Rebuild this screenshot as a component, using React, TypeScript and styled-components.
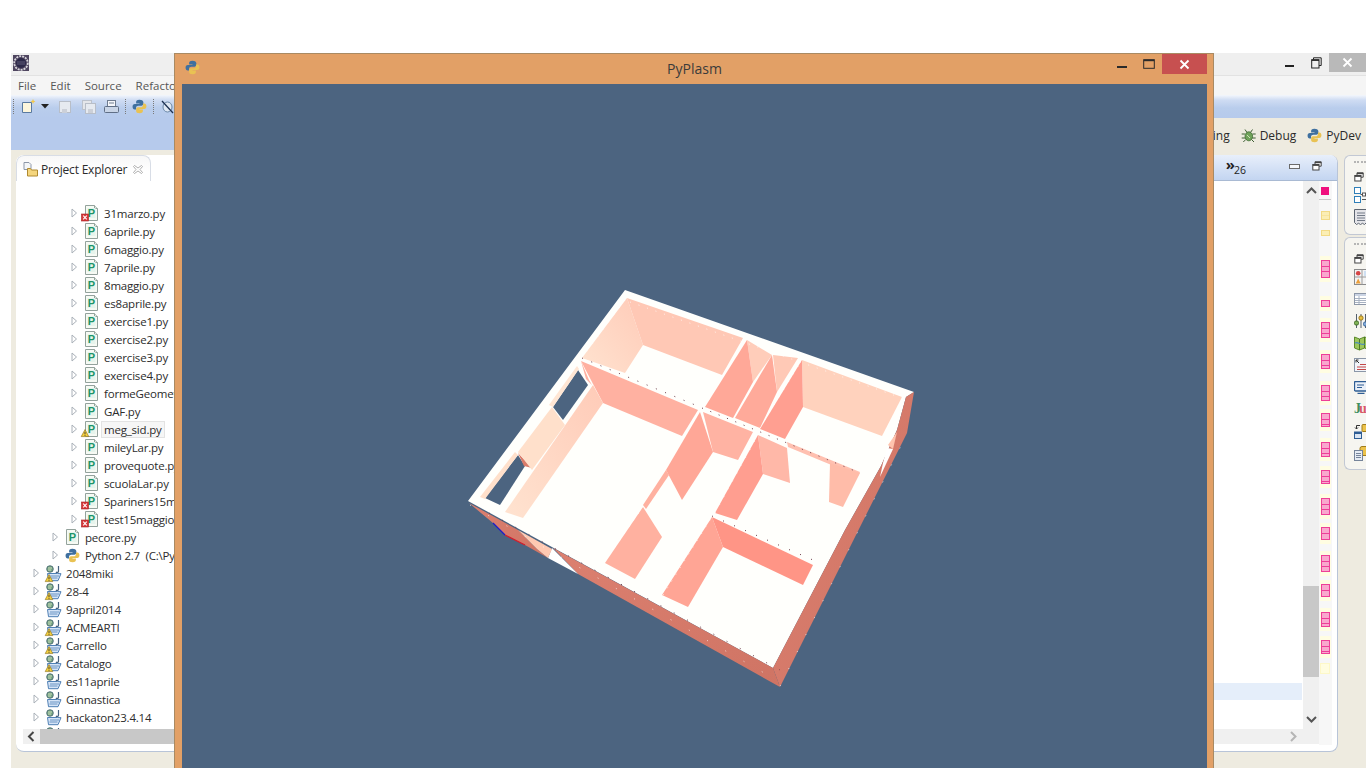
import React from 'react';
import styled, { createGlobalStyle } from 'styled-components';

const GlobalStyle = createGlobalStyle`
  html, body {
    margin: 0;
    padding: 0;
    background: #ffffff;
    overflow: hidden;
  }
  * {
    box-sizing: border-box;
  }
`;

const uiFont = `"Open Sans", "Noto Sans", "Liberation Sans", sans-serif`;

const Screen = styled.div`
  position: relative;
  width: 1366px;
  height: 768px;
  padding: 53px 0 0 11px;
  overflow: hidden;
  font-family: ${uiFont};
  font-size: 11.5px;
  color: #2c2c2c;
`;

const Eclipse = styled.div`
  display: flex;
  flex-direction: column;
  height: 715px;
  background: #eeebe0;
`;

const TitleBar = styled.div`
  display: flex;
  align-items: flex-start;
  justify-content: space-between;
  height: 23px;
  padding-left: 2px;
  background: #efefef;
  border-bottom: 1px solid #e2e2e2;
`;

const AppLogo = styled.svg`
  margin-top: 2px;
`;

const TitleControls = styled.div`
  display: flex;
  align-items: flex-start;
`;

const ControlCell = styled.div<{ $w: number; $bg?: string }>`
  display: flex;
  align-items: center;
  justify-content: center;
  width: ${(p) => p.$w}px;
  height: 19px;
  background: ${(p) => p.$bg ?? 'transparent'};
`;

const MenuBar = styled.div`
  display: flex;
  align-items: center;
  gap: 14px;
  height: 19px;
  padding-left: 7px;
  background: #f5f5f5;
  color: #555555;
  font-size: 11.5px;
`;

const ToolRow = styled.div`
  display: flex;
  align-items: center;
  height: 23px;
  padding-left: 2px;
  background: linear-gradient(#f4f7fc 0, #cfdcf3 5px, #b9cdec 13px, #b6caec 100%);
`;

const ToolGrip = styled.span<{ $before?: number }>`
  width: 0;
  height: 15px;
  margin: 0 5px 0 ${(p) => p.$before ?? 0}px;
  border-left: 1px dotted #7a7a7a;
`;

const ToolButton = styled.span<{ $w: number; $before?: number }>`
  display: flex;
  align-items: center;
  justify-content: center;
  width: ${(p) => p.$w}px;
  height: 18px;
  margin-left: ${(p) => p.$before ?? 0}px;
`;

const PerspectiveRow = styled.div`
  display: flex;
  height: 32px;
`;

const BlueFill = styled.div`
  width: 300px;
  background: #b6caec;
`;

const PerspectiveBar = styled.div`
  flex: 1;
  display: flex;
  align-items: center;
  justify-content: flex-end;
  gap: 11px;
  padding: 3px 5px 0 0;
  background: #eeebe0;
  font-size: 12px;
  color: #2a2a2a;
`;

const Perspective = styled.span`
  display: flex;
  align-items: center;
  gap: 4px;
  white-space: nowrap;
`;

const Workbench = styled.div`
  flex: 1;
  display: flex;
  padding: 5px 0 16px 5px;
  min-height: 0;
`;

const Panel = styled.section<{ $w?: number }>`
  display: flex;
  flex-direction: column;
  width: ${(p) => (p.$w ? `${p.$w}px` : 'auto')};
  flex: ${(p) => (p.$w ? '0 0 auto' : '1')};
  min-width: 0;
  background: #ffffff;
  border-radius: 8px;
  border-right: 1px solid #b8c4d8;
  border-bottom: 1px solid #b8c4d8;
  overflow: hidden;
`;

const ExplorerHead = styled.div`
  height: 26px;
  background: #ffffff;
`;

const ExplorerTab = styled.div`
  display: flex;
  align-items: center;
  width: 135px;
  height: 26px;
  padding: 2px 0 0 6px;
  border: 1px solid #d8dde6;
  border-bottom: 0;
  border-radius: 8px 8px 0 0;
  background: linear-gradient(#f7f7f7, #ffffff 60%);
  font-size: 12px;
`;

const TabLabel = styled.span`
  margin: 0 6px 0 3px;
  letter-spacing: -0.2px;
  white-space: nowrap;
`;

const Tree = styled.div`
  flex: 1;
  min-height: 0;
  padding-top: 23px;
  overflow: hidden;
`;

const Row = styled.div<{ $level: number }>`
  display: flex;
  align-items: center;
  height: 18px;
  padding-left: ${(p) => 17 + (p.$level - 1) * 19}px;
  white-space: pre;
`;

const Twisty = styled.span`
  display: flex;
  align-items: center;
  width: 13px;
`;

const RowIcon = styled.span`
  display: flex;
  align-items: center;
  width: 20px;
  height: 16px;
`;

const RowLabel = styled.span<{ $selected?: boolean }>`
  margin-left: ${(p) => (p.$selected ? '-3px' : '0')};
  padding: ${(p) => (p.$selected ? '0 2px' : '0')};
  height: 17px;
  letter-spacing: -0.2px;
  background: ${(p) => (p.$selected ? '#f6f6f6' : 'transparent')};
  border: ${(p) => (p.$selected ? '1px solid #e3e3e3' : '0')};
  line-height: ${(p) => (p.$selected ? '15px' : '17px')};
`;

const HScroll = styled.div`
  display: flex;
  height: 15px;
  margin-bottom: 7px;
  background: #f0f0f0;
`;

const ExplorerHScroll = styled(HScroll)`
  margin-left: 7px;
`;

const ScrollEnd = styled.span<{ $w: number }>`
  display: flex;
  align-items: center;
  justify-content: center;
  flex: 0 0 ${(p) => p.$w}px;
`;

const ScrollRest = styled.span`
  display: flex;
  align-items: center;
  justify-content: flex-end;
  flex: 1;
  padding-right: 20px;
`;

const HThumb = styled.span`
  flex: 1;
  background: #c8c8c8;
`;

const PanelGap = styled.div`
  flex: 0 0 4px;
`;

const EditorHead = styled.div`
  display: flex;
  align-items: flex-start;
  justify-content: flex-end;
  flex: 0 0 26px;
  padding: 6px 15px 0 0;
  background: linear-gradient(#e8effb, #c3d5f1);
  border-bottom: 1px solid #a9bad3;
`;

const OverflowCount = styled.span`
  display: flex;
  align-items: flex-start;
  margin-right: 31px;
  color: #222222;
`;

const OverflowMark = styled.span`
  font-size: 15px;
  font-weight: 700;
  line-height: 7px;
`;

const OverflowNum = styled.span`
  font-size: 10.5px;
  line-height: 11px;
  margin: 4px 0 0 -1px;
`;

const HeadButton = styled.span`
  display: flex;
  margin-left: 12px;
`;

const MinimizeIcon = styled.svg`
  margin-top: 3px;
`;

const EditorBody = styled.div`
  flex: 1;
  display: flex;
  min-height: 0;
`;

const EditorMain = styled.div`
  flex: 1;
  display: flex;
  flex-direction: column;
  min-width: 0;
`;

const EditorUpper = styled.div`
  flex: 1;
  display: flex;
  min-height: 0;
`;

const EditorText = styled.div`
  flex: 1;
  background: #ffffff;
`;

const CurrentLine = styled.div`
  height: 17px;
  margin: 502px 1px 0 0;
  background: #e5eefa;
`;

const VScroll = styled.div`
  display: flex;
  flex-direction: column;
  flex: 0 0 16px;
  background: #f0f0f0;
`;

const ArrowCell = styled.span`
  display: flex;
  align-items: center;
  justify-content: center;
  flex: 0 0 20px;
`;

const VThumb = styled.span`
  height: 91px;
  margin-top: 385px;
  background: #c8c8c8;
`;

const BottomArrow = styled(ArrowCell)`
  margin-top: auto;
`;

const Ruler = styled.svg`
  display: block;
  flex: 0 0 13px;
  margin-right: 5px;
`;

const Trim = styled.aside`
  flex: 0 0 22px;
  display: flex;
  flex-direction: column;
  gap: 2px;
  min-width: 0;
  margin-left: 6px;
`;

const TrimStack = styled.div<{ $h: number }>`
  display: flex;
  flex-direction: column;
  align-items: flex-start;
  gap: 2px;
  width: 22px;
  height: ${(p) => p.$h}px;
  padding: 5px 0 0 9px;
  border: 1px solid #c2c8d4;
  border-right: 0;
  border-radius: 6px 0 0 6px;
  background: #f6f5f0;
  overflow: hidden;
`;

const TrimGrip = styled.span`
  flex: 0 0 3px;
  width: 12px;
  border-top: 2px dotted #b5b5b5;
  margin-bottom: 4px;
`;

const TrimIcon = styled.span<{ $h?: number }>`
  display: flex;
  flex: 0 0 auto;
  align-items: center;
  height: ${(p) => p.$h ?? 20}px;
`;

const JUnitMark = styled.span`
  font-family: "Liberation Serif", serif;
  font-weight: 700;
  font-size: 14px;
  letter-spacing: -2px;
  color: #3f8f5f;
`;

const JUnitTail = styled.span`
  color: #d85a68;
`;

const PlasmWindow = styled.div`
  position: absolute;
  left: 174px;
  top: 53px;
  display: flex;
  flex-direction: column;
  width: 1040px;
  height: 730px;
  padding: 0 6px 8px 7px;
  background: #e2a066;
  border: 1px solid #a98a63;
`;

const PlasmTitle = styled.header`
  display: grid;
  grid-template-columns: 1fr auto 1fr;
  align-items: start;
  flex: 0 0 30px;
`;

const PlasmIcon = styled.span`
  display: flex;
  margin: 6px 0 0 3px;
`;

const PlasmName = styled.h1`
  margin: 6px 0 0 0;
  font-size: 14px;
  font-weight: 400;
  line-height: 18px;
  color: #3b3b3b;
`;

const PlasmControls = styled.div`
  display: flex;
  align-items: flex-start;
  justify-self: end;
`;

const PlasmButton = styled.span<{ $w: number; $bg?: string }>`
  display: flex;
  align-items: center;
  justify-content: center;
  width: ${(p) => p.$w}px;
  height: 20px;
  background: ${(p) => p.$bg ?? 'transparent'};
`;

const Viewport = styled.svg`
  display: block;
  flex: 0 0 690px;
  width: 1025px;
  background: #4c6480;
`;

const OverlaySvg = styled.svg<{ $shift: number }>`
  margin-left: ${(p) => p.$shift}px;
  overflow: visible;
`;

const PythonLogo = ({ size = 15 }: { size?: number }) => (
  <svg width={size} height={size} viewBox="0 0 16 16">
    <path
      d="M8 .8c-3 0-3.6 1.1-3.6 2.4v1.6H8v.6H3C1.5 5.4.6 6.6.6 8.2s.9 3 2.3 3h1.4V9.4c0-1.3 1.1-2.3 2.4-2.3h3.4c1.1 0 2-.9 2-2V3.2C11.6 1.700 10.300.8 8 .8z"
      fill="#3f709f"
    />
    <path
      d="M8 15.200c3 0 3.600-1.100 3.600-2.400v-1.600H8v-.6h5c1.500 0 2.400-1.200 2.400-2.800s-.9-3-2.300-3h-1.400v1.800c0 1.300-1.100 2.300-2.400 2.300H6.400c-1.100 0-2 .9-2 2v1.900c0 1.500 1.300 2.400 3.600 2.400z"
      fill="#e9c253"
    />
  </svg>
);

const ErrorBadge = () => (
  <g>
    <rect x="0" y="9" width="7" height="7" fill="#d8383a" stroke="#a52020" strokeWidth="0.6" />
    <path d="M1.700 10.700l3.600 3.600M5.300 10.700l-3.600 3.600" stroke="#ffffff" strokeWidth="1.100" />
  </g>
);

const WarnBadge = () => (
  <g>
    <path d="M3.500 8.500L7.300 15.600H-.3z" fill="#f4cf3c" stroke="#8a6d18" strokeWidth="0.6" />
    <path d="M3.500 10.800v2.500M3.500 14v.8" stroke="#333333" strokeWidth="0.9" />
  </g>
);

const PyFileIcon = ({ badge }: { badge?: string }) => (
  <OverlaySvg $shift={-3} width="18" height="16" viewBox="-4 0 18 16">
    <path d="M.5.500h9l3 3v12H.5z" fill="#f6faf4" stroke="#93a29c" />
    <path d="M9.500.500v3h3" fill="#dfe8e0" stroke="#93a29c" />
    <rect x="2.500" y="3" width="8" height="10" fill="#e6f4ec" />
    <text
      x="6.500"
      y="12"
      textAnchor="middle"
      fontFamily="Liberation Sans, sans-serif"
      fontWeight="700"
      fontSize="11"
      fill="#1f9468"
    >
      P
    </text>
    {badge === 'error' && (
      <g transform="translate(-3.500 0)">
        <ErrorBadge />
      </g>
    )}
    {badge === 'warn' && (
      <g transform="translate(-3.500 0)">
        <WarnBadge />
      </g>
    )}
  </OverlaySvg>
);

const ProjectIcon = ({ badge }: { badge?: string }) => (
  <OverlaySvg $shift={-1} width="18" height="17" viewBox="0 0 18 17">
    <circle cx="5" cy="4" r="3.300" fill="#7aa884" stroke="#3d5f6c" strokeWidth="0.8" />
    <path d="M3 3h4M3 5h3" stroke="#d9e6c8" strokeWidth="0.8" />
    <path d="M13.500 1v5.200c0 1.300-1.800 1.600-2.500.6" fill="none" stroke="#46617e" strokeWidth="1.200" />
    <path d="M2.500 8.500h10l3.500.2-3 7H3.500z" fill="#d5e4f7" stroke="#3d73ad" strokeWidth="0.9" />
    <path d="M5 11h9M4.500 13h8" stroke="#3d73ad" strokeWidth="0.7" />
    {badge === 'warn' && (
      <g transform="translate(.5 1)">
        <WarnBadge />
      </g>
    )}
  </OverlaySvg>
);

const TwistyIcon = () => (
  <svg width="7" height="10" viewBox="0 0 7 10">
    <path d="M1 1l4.500 4-4.500 4z" fill="#ffffff" stroke="#a9b0b8" />
  </svg>
);

const Chevron = ({ dir, color = '#555555' }: { dir: 'up' | 'down' | 'left' | 'right'; color?: string }) => {
  const d = {
    up: 'M1 7l4.500-4.500L10 7',
    down: 'M1 3l4.500 4.500L10 3',
    left: 'M7.500 1L3 5.500 7.500 10',
    right: 'M3 1l4.500 4.500L3 10',
  }[dir];
  return (
    <svg width="11" height="11" viewBox="0 0 11 11">
      <path d={d} fill="none" stroke={color} strokeWidth="2" />
    </svg>
  );
};

const RestoreIcon = ({ stroke = '#444444' }: { stroke?: string }) => (
  <svg width="10" height="10" viewBox="0 0 10 10">
    <path d="M3 3V.8h6.200v4.400H7" fill="#ffffff" stroke={stroke} />
    <rect x="3" y="0.800" width="6.200" height="1.400" fill={stroke} />
    <rect x="0.800" y="3.500" width="6.200" height="5.500" fill="#ffffff" stroke={stroke} />
    <rect x="0.800" y="3.500" width="6.200" height="1.400" fill={stroke} />
  </svg>
);

const DebugIcon = () => (
  <svg width="15" height="15" viewBox="0 0 15 15">
    <ellipse cx="7.800" cy="8.300" rx="3.800" ry="4.500" fill="#6fa35a" stroke="#3f6b34" strokeWidth="0.8" />
    <path
      d="M4 1.500l2 3M11.500 1.500l-2 3M.7 6h3.200M11.500 6h3.200M.7 10h3.500M11.300 10h3.400M2.300 14l2.500-2.500M13 14l-2.500-2.500"
      stroke="#3f5f35"
      fill="none"
    />
    <path d="M6 7l3 3" stroke="#cfe2b8" />
  </svg>
);

const treeRows = [
  { label: '31marzo.py', level: 3, kind: 'py', badge: 'error' },
  { label: '6aprile.py', level: 3, kind: 'py' },
  { label: '6maggio.py', level: 3, kind: 'py' },
  { label: '7aprile.py', level: 3, kind: 'py' },
  { label: '8maggio.py', level: 3, kind: 'py' },
  { label: 'es8aprile.py', level: 3, kind: 'py' },
  { label: 'exercise1.py', level: 3, kind: 'py' },
  { label: 'exercise2.py', level: 3, kind: 'py' },
  { label: 'exercise3.py', level: 3, kind: 'py' },
  { label: 'exercise4.py', level: 3, kind: 'py' },
  { label: 'formeGeometriche.py', level: 3, kind: 'py' },
  { label: 'GAF.py', level: 3, kind: 'py' },
  { label: 'meg_sid.py', level: 3, kind: 'py', badge: 'warn', selected: true },
  { label: 'mileyLar.py', level: 3, kind: 'py' },
  { label: 'provequote.py', level: 3, kind: 'py' },
  { label: 'scuolaLar.py', level: 3, kind: 'py' },
  { label: 'Spariners15maggio.py', level: 3, kind: 'py', badge: 'error' },
  { label: 'test15maggio.py', level: 3, kind: 'py', badge: 'error' },
  { label: 'pecore.py', level: 2, kind: 'py' },
  { label: 'Python 2.7  (C:\\Python27\\python.exe)', level: 2, kind: 'python' },
  { label: '2048miki', level: 1, kind: 'project', badge: 'warn' },
  { label: '28-4', level: 1, kind: 'project', badge: 'warn' },
  { label: '9april2014', level: 1, kind: 'project' },
  { label: 'ACMEARTI', level: 1, kind: 'project', badge: 'warn' },
  { label: 'Carrello', level: 1, kind: 'project', badge: 'warn' },
  { label: 'Catalogo', level: 1, kind: 'project', badge: 'warn' },
  { label: 'es11aprile', level: 1, kind: 'project' },
  { label: 'Ginnastica', level: 1, kind: 'project' },
  { label: 'hackaton23.4.14', level: 1, kind: 'project' },
  { label: '', level: 1, kind: 'project' },
];

// marks of the overview ruler, in page coordinates
const errorMarks = [
  [260, 278],
  [300, 307],
  [322, 338],
  [354, 369],
  [385, 401],
  [413, 427],
  [442, 457],
  [470, 484],
  [498, 515],
  [527, 540],
  [555, 572],
  [584, 597],
  [612, 627],
  [640, 654],
];

const OverviewRuler = () => (
  <Ruler width="13" height="564" viewBox="1319 181 13 564">
    <rect x="1319" y="181" width="13" height="564" fill="#f7f7f7" />
    <rect x="1321" y="187" width="8" height="8" fill="#f0107e" />
    <rect x="1319" y="199" width="12" height="1" fill="#c9c9c9" />
    <rect x="1321.500" y="211.500" width="8" height="8" fill="#fbeeb4" stroke="#f2da86" />
    <rect x="1321.500" y="215.500" width="8" height="0.500" fill="#f2da86" />
    <rect x="1321.500" y="230.500" width="8" height="5" fill="#fbeeb4" stroke="#f2da86" />
    {errorMarks.map(([from, to]) => {
      const lines: number[] = [];
      for (let y = from + 5.5; y < to - 2; y += 5.5) lines.push(y);
      return (
        <g key={from}>
          <rect x="1320" y={from - 4} width="11" height={to - from + 8} fill="#fffde2" />
          <rect x="1321.500" y={from + 0.5} width="8" height={to - from - 1} fill="#f9a8cd" stroke="#ee3f98" />
          {lines.map((y) => (
            <rect key={y} x="1321.500" y={Math.round(y)} width="8" height="1" fill="#ee3f98" />
          ))}
        </g>
      );
    })}
    <rect x="1320.500" y="663.500" width="9" height="10" fill="#fffde0" stroke="#fdf8c8" />
  </Ruler>
);

const trimIcons = [
  <svg key="a" width="16" height="16" viewBox="0 0 16 16">
    <rect x="0.500" y="0.500" width="15" height="15" fill="#f4f4f4" stroke="#8b8b8b" />
    <path d="M8 .5v15M.5 8h15" stroke="#9a9a9a" />
    <circle cx="4.200" cy="4.200" r="2.300" fill="#d64545" />
    <path d="M4.200 9.500l2.500 5h-5z" fill="#eda03a" />
    <rect x="10" y="2" width="5" height="5" fill="#cfe0f3" />
  </svg>,
  <svg key="b" width="14" height="12" viewBox="0 0 14 12">
    <rect x="0.500" y="0.500" width="13" height="11" fill="#ffffff" stroke="#8d97a8" />
    <rect x="1" y="1" width="12" height="2" fill="#cbd4e4" />
    <path d="M1 5.500h12M1 7.500h12M1 9.500h12M5 3v8" stroke="#a8b2c2" />
  </svg>,
  <svg key="c" width="14" height="14" viewBox="0 0 14 14">
    <path d="M2.500 0v14M7 0v14M11.500 0v14" stroke="#55606c" />
    <rect x="0.500" y="7" width="4" height="4" rx="1.500" fill="#7fb255" stroke="#46702a" />
    <rect x="5" y="2" width="4" height="4" rx="1.500" fill="#e8c040" stroke="#96741a" />
    <rect x="9.500" y="8" width="4" height="4" rx="1.500" fill="#7fa8d8" stroke="#3f6a9c" />
  </svg>,
  <svg key="d" width="17" height="15" viewBox="0 0 17 15">
    <path d="M.5 1l5 2 5-2 6 2v11l-6-2-5 2-5-2z" fill="#9ec75c" stroke="#5d8a2c" />
    <path d="M5.500 3v11M10.500 1v11" stroke="#4f7a28" />
    <path d="M1 7c3-2 6 3 10 1" fill="none" stroke="#4c8cc0" strokeWidth="1.200" />
  </svg>,
  <svg key="e" width="14" height="14" viewBox="0 0 14 14">
    <rect x="0.500" y="0.500" width="13" height="13" fill="#f2f5fa" stroke="#8b97a8" />
    <path d="M2 2l3 3M2 2v2.500M2 2h2.500" stroke="#333333" fill="none" />
    <path d="M6 6.500h6M3 9h9M3 11.500h9" stroke="#c44848" />
  </svg>,
  <svg key="f" width="14" height="13" viewBox="0 0 14 13">
    <rect x="0.500" y="0.500" width="13" height="9.500" rx="1" fill="#e9eff7" stroke="#2e5d94" strokeWidth="1.300" />
    <path d="M3 4h7M3 6.500h5" stroke="#2e5d94" />
    <path d="M3.500 12.500h7" stroke="#2e5d94" strokeWidth="1.500" />
  </svg>,
  <JUnitMark key="g">
    J<JUnitTail>u</JUnitTail>
  </JUnitMark>,
  <svg key="h" width="14" height="15" viewBox="0 0 14 15">
    <path d="M6 1.500H2.500V5M1 3.500l1.500 1.500L4 3.500" fill="none" stroke="#333333" />
    <rect x="0.500" y="8" width="7" height="6.500" fill="#d9e4f2" stroke="#2e5d94" />
    <rect x="0.500" y="8" width="7" height="2" fill="#2e5d94" />
    <rect x="8" y="0.500" width="6" height="7" rx="1" fill="#ecc24a" stroke="#a07c1c" />
  </svg>,
  <svg key="i" width="15" height="15" viewBox="0 0 15 15">
    <rect x="6" y="0.500" width="8" height="9" rx="2" fill="#ecc24a" stroke="#a07c1c" />
    <rect x="0.500" y="4.500" width="8" height="10" fill="#e6ecf4" stroke="#76849a" />
    <path d="M2 7.500h5M2 9.500h5M2 11.500h5" stroke="#76849a" />
  </svg>,
];

type Poly = { pts: string; fill: string };

const salmon = 'url(#sideShade)';

const modelFaces: Poly[] = [
  // outer side walls
  { pts: '914,392 907,433 780,687 773,668 845,530 881,466 897,430 906,397', fill: salmon },
  { pts: '553,548 578,574 780,687 773,668', fill: salmon },
  { pts: '469,503 493,523 505,535 525,545 548,558 537,549 518,530', fill: salmon },
  { pts: '552,548 548,558 578,574', fill: '#ffffff' },
  { pts: '518,530 552,549 548,558 537,549', fill: '#ffc9b2' },
  { pts: '888,445 897,432 893,449', fill: '#ffc4ae' },
  { pts: '883,463 887,448 893,449 880,477', fill: '#ffffff' },
  // top left room
  { pts: '627,298 643,345 625,373 582,358', fill: 'url(#leftWall)' },
  { pts: '627,298 743,338 722,375 643,345', fill: '#ffc8b5' },
  { pts: '581,361 603,403 682,436 698,410', fill: '#ffb1a1' },
  // left wall and window openings
  { pts: '552,407 565,425 532,470 518,452', fill: '#ffe0cb' },
  { pts: '593,385 603,403 523,518 505,512', fill: 'url(#leftWall)' },
  { pts: '549,405 577,366 579,369 553,407', fill: '#ffe6d4' },
  { pts: '480,497 485,499 518,455 515,452', fill: '#ffe0cb' },
  { pts: '581,361 589,380 592,385 586,379', fill: '#ffb1a1' },
  // partitions on the back wall
  { pts: '747,340 772,355 753,382', fill: '#ffcdba' },
  { pts: '773,355 798,358 777,392', fill: '#ffc9b6' },
  { pts: '802,360 902,397 882,436 803,407', fill: '#ffd2bd' },
  { pts: '747,340 753,382 733,418 705,407', fill: '#ffa898' },
  { pts: '772,355 777,392 760,428 735,418', fill: '#ffaa9a' },
  { pts: '802,360 803,407 785,439 760,429', fill: '#ff9f91' },
  // middle of the plan
  { pts: '703,412 753,432 738,460 713,452', fill: '#ffb3a3' },
  { pts: '700,412 713,452 682,500 666,470', fill: '#ffa797' },
  { pts: '758,435 787,448 790,483 763,474', fill: '#ffb8a8' },
  { pts: '758,435 763,474 737,520 715,513', fill: '#ff9e90' },
  { pts: '787,442 860,472 858,476 788,447', fill: '#ffc0b0' },
  { pts: '830,463 860,473 843,507 829,502', fill: '#ffbca9' },
  // lower rooms
  { pts: '643,507 662,537 635,579 605,563', fill: '#ffb1a0' },
  { pts: '643,505 666,470 669,475 646,509', fill: '#ffb1a0' },
  { pts: '712,517 723,547 688,607 662,595', fill: '#ffa595' },
  { pts: '712,517 813,565 803,585 723,547', fill: '#ff9586' },
];

const windowHoles = ['553,407 578,370 588,385 563,420', '518,455 525,466 500,505 485,498'];

const darkDots = [
  { line: [582, 358, 700, 407], dash: '1 9' },
  { line: [702, 408, 860, 473], dash: '1 8' },
  { line: [489, 513, 780, 670], dash: '1 14' },
  { line: [712, 516, 813, 560], dash: '1 11' },
];

const lightDots = [
  { line: [625, 300, 484, 490], dash: '1 8' },
  { line: [630, 302, 902, 398], dash: '1 8' },
  { line: [606, 560, 643, 507], dash: '1 7' },
  { line: [663, 595, 712, 517], dash: '1 7' },
  { line: [715, 513, 758, 435], dash: '1 8' },
  { line: [704, 408, 745, 340], dash: '1 8' },
  { line: [760, 428, 802, 360], dash: '1 8' },
  { line: [780, 686, 908, 432], dash: '1 18' },
  { line: [470, 505, 780, 682], dash: '1 20' },
];

const FloorPlanModel = () => (
  <Viewport viewBox="182 84 1025 690">
    <defs>
      <linearGradient id="sideShade" x1="0" y1="0" x2="1" y2="1">
        <stop offset="0" stopColor="#dc8070" />
        <stop offset="1" stopColor="#cf7464" />
      </linearGradient>
      <linearGradient id="leftWall" x1="0" y1="1" x2="1" y2="0">
        <stop offset="0" stopColor="#ffe3d0" />
        <stop offset="1" stopColor="#ffcbb8" />
      </linearGradient>
    </defs>
    <polygon points="625,290 914,392 906,397 897,430 881,466 845,530 773,668 468,501" fill="#fffffc" />
    {windowHoles.map((pts) => (
      <polygon key={pts} points={pts} fill="#4c6480" />
    ))}
    <polygon points="518,453 532,468 524,466" fill="#d97b6a" />
    {modelFaces.map((f) => (
      <polygon key={f.pts} points={f.pts} fill={f.fill} />
    ))}
    <path d="M493 523L505 535" stroke="#1c1cc8" strokeWidth="1.300" />
    <path d="M505 535L525 545" stroke="#d21c2c" strokeWidth="1.300" />
    {darkDots.map(({ line: [x1, y1, x2, y2], dash }) => (
      <line key={x1} x1={x1} y1={y1} x2={x2} y2={y2} stroke="#6a3a48" strokeDasharray={dash} />
    ))}
    {lightDots.map(({ line: [x1, y1, x2, y2], dash }) => (
      <line key={x1} x1={x1} y1={y1} x2={x2} y2={y2} stroke="#ffffff" strokeOpacity="0.7" strokeDasharray={dash} />
    ))}
  </Viewport>
);

const NewFileIcon = () => (
  <svg width="15" height="15" viewBox="0 0 15 15">
    <path d="M1.500 3.500h9v10h-9z" fill="#fdf6dc" stroke="#5a7aa0" />
    <path d="M12 0l.8 1.700L14.500 2.500l-1.700.8L12 5l-.8-1.700L9.500 2.500l1.700-.8z" fill="#f2c94c" />
  </svg>
);

const SaveIcon = ({ stacked }: { stacked?: boolean }) => (
  <svg width="14" height="14" viewBox="0 0 14 14">
    {stacked && <rect x="0.500" y="0.500" width="9" height="9" fill="#e4e6ea" stroke="#bcc2cc" />}
    <rect
      x={stacked ? 3.5 : 1.5}
      y={stacked ? 3.5 : 1.5}
      width={stacked ? 10 : 11}
      height={stacked ? 10 : 11}
      fill="#e6eaf0"
      stroke="#b8bec8"
    />
    <rect x={stacked ? 6 : 4} y="9" width="5" height="4" fill="#ccd0d8" />
  </svg>
);

const PrintIcon = () => (
  <svg width="15" height="14" viewBox="0 0 15 14">
    <rect x="3.500" y="0.500" width="8" height="6" fill="#f4f6fa" stroke="#6f7c90" />
    <rect x="0.500" y="6.500" width="14" height="6" rx="1" fill="#c8d4e6" stroke="#5f6e86" />
    <path d="M5 3h5" stroke="#6f7c90" />
  </svg>
);

const NoBreakIcon = () => (
  <svg width="13" height="14" viewBox="0 0 13 14">
    <ellipse cx="6.500" cy="7" rx="4.500" ry="5" fill="#dfe8f4" stroke="#6b88a8" />
    <path d="M1 1l11 12" stroke="#1c3050" strokeWidth="1.300" />
  </svg>
);

export default function App() {
  return (
    <Screen>
      <GlobalStyle />
      <Eclipse>
        <TitleBar>
          <AppLogo width="16" height="16" viewBox="0 0 16 16">
            <rect width="16" height="16" fill="#4f4660" />
            <circle cx="8" cy="8" r="6.800" fill="none" stroke="#d8d6dc" strokeWidth="1.800" strokeDasharray="2 1" />
            <circle cx="8" cy="8" r="5" fill="#2c2848" />
            <path d="M4 7h8M4 9h8" stroke="#5e5a78" />
          </AppLogo>
          <TitleControls>
            <ControlCell $w={26}>
              <svg width="10" height="10" viewBox="0 0 10 10">
                <rect y="7" width="9" height="2" fill="#222222" />
              </svg>
            </ControlCell>
            <ControlCell $w={26}>
              <svg width="11" height="12" viewBox="0 0 11 12">
                <path d="M2.500 2.500V.8h7.700v7.700H8" fill="none" stroke="#222222" />
                <rect x="0.700" y="2.700" width="7.300" height="8.300" fill="none" stroke="#222222" />
                <rect x="0.700" y="2.700" width="7.300" height="1.200" fill="#222222" />
              </svg>
            </ControlCell>
            <ControlCell $w={37} $bg="#b9b9b9">
              <svg width="11" height="11" viewBox="0 0 11 11">
                <path d="M1.500 1.500l8 8M9.500 1.500l-8 8" stroke="#ffffff" strokeWidth="1.800" />
              </svg>
            </ControlCell>
          </TitleControls>
        </TitleBar>
        <MenuBar>
          <span>File</span>
          <span>Edit</span>
          <span>Source</span>
          <span>Refactor</span>
          <span>Navigate</span>
        </MenuBar>
        <ToolRow>
          <ToolGrip />
          <ToolButton $w={19}>
            <NewFileIcon />
          </ToolButton>
          <ToolButton $w={14}>
            <svg width="8" height="5" viewBox="0 0 8 5">
              <path d="M0 0h8L4 4.500z" fill="#222222" />
            </svg>
          </ToolButton>
          <ToolButton $w={24} $before={1}>
            <SaveIcon />
          </ToolButton>
          <ToolButton $w={24}>
            <SaveIcon stacked />
          </ToolButton>
          <ToolButton $w={20}>
            <PrintIcon />
          </ToolButton>
          <ToolGrip $before={4} />
          <ToolButton $w={17}>
            <PythonLogo />
          </ToolButton>
          <ToolGrip $before={5} />
          <ToolButton $w={17}>
            <NoBreakIcon />
          </ToolButton>
        </ToolRow>
        <PerspectiveRow>
          <BlueFill />
          <PerspectiveBar>
            <Perspective>Team Synchronizing</Perspective>
            <Perspective>
              <DebugIcon />
              Debug
            </Perspective>
            <Perspective>
              <PythonLogo />
              PyDev
            </Perspective>
          </PerspectiveBar>
        </PerspectiveRow>
        <Workbench>
          <Panel $w={300}>
            <ExplorerHead>
              <ExplorerTab>
                <svg width="15" height="15" viewBox="0 0 15 15">
                  <path d="M1 .5h5l2 2v5H1z" fill="#f4f6f8" stroke="#8d97a8" />
                  <path d="M4.500 6.500h3l1 1.500h6v6h-10z" fill="#f5d67e" stroke="#b08a30" />
                </svg>
                <TabLabel>Project Explorer</TabLabel>
                <svg width="11" height="11" viewBox="0 0 11 11">
                  <path
                    d="M1.500 1.500l3.500 2.500 3.500-2.500 1 1-2.500 3 2.500 3-1 1L5 7 1.500 9.500l-1-1L3 5.500.5 2.500z"
                    fill="#ffffff"
                    stroke="#9a9a9a"
                    strokeWidth="0.800"
                  />
                </svg>
              </ExplorerTab>
            </ExplorerHead>
            <Tree>
              {treeRows.map((row) => (
                <Row key={row.label || 'clipped'} $level={row.level}>
                  <Twisty>
                    <TwistyIcon />
                  </Twisty>
                  <RowIcon>
                    {row.kind === 'py' && <PyFileIcon badge={row.badge} />}
                    {row.kind === 'python' && <PythonLogo />}
                    {row.kind === 'project' && <ProjectIcon badge={row.badge} />}
                  </RowIcon>
                  <RowLabel $selected={row.selected}>{row.label}</RowLabel>
                </Row>
              ))}
            </Tree>
            <ExplorerHScroll>
              <ScrollEnd $w={17}>
                <Chevron dir="left" color="#444444" />
              </ScrollEnd>
              <HThumb />
            </ExplorerHScroll>
          </Panel>
          <PanelGap />
          <Panel>
            <EditorHead>
              <OverflowCount>
                <OverflowMark>»</OverflowMark>
                <OverflowNum>26</OverflowNum>
              </OverflowCount>
              <HeadButton>
                <MinimizeIcon width="11" height="6" viewBox="0 0 11 6">
                  <rect x="0.500" y="0.500" width="10" height="4" fill="#f4f6fa" stroke="#6a6a6a" />
                </MinimizeIcon>
              </HeadButton>
              <HeadButton>
                <RestoreIcon />
              </HeadButton>
            </EditorHead>
            <EditorBody>
              <EditorMain>
                <EditorUpper>
                  <EditorText>
                    <CurrentLine />
                  </EditorText>
                  <VScroll>
                    <ArrowCell>
                      <Chevron dir="up" />
                    </ArrowCell>
                    <VThumb />
                    <BottomArrow>
                      <Chevron dir="down" />
                    </BottomArrow>
                  </VScroll>
                </EditorUpper>
                <HScroll>
                  <ScrollRest>
                    <Chevron dir="right" color="#b5b5b5" />
                  </ScrollRest>
                </HScroll>
              </EditorMain>
              <OverviewRuler />
            </EditorBody>
          </Panel>
          <Trim>
            <TrimStack $h={80}>
              <TrimGrip />
              <TrimIcon $h={13}>
                <RestoreIcon />
              </TrimIcon>
              <TrimIcon>
                <svg width="16" height="16" viewBox="0 0 16 16">
                  <rect x="0.500" y="0.500" width="6" height="6" fill="#ffffff" stroke="#2f7fb8" />
                  <rect x="0.500" y="9.500" width="6" height="6" fill="#ffffff" stroke="#2f7fb8" />
                  <rect x="8.500" y="6" width="3" height="3" fill="#ffffff" stroke="#555555" />
                  <path d="M6.500 7.500h2M11.500 7.500H16M8 12.500h8" stroke="#555555" />
                </svg>
              </TrimIcon>
              <TrimIcon>
                <svg width="14" height="16" viewBox="0 0 14 16">
                  <path d="M.5.500h12v13l-2 2-2-1.200-2 1.200-2-1.200-2 1.200-2-2z" fill="#e4e4e8" stroke="#5c6470" />
                  <path d="M3 4h8M3 6.500h8M3 9h8M3 11.500h8" stroke="#737b88" />
                </svg>
              </TrimIcon>
            </TrimStack>
            <TrimStack $h={233}>
              <TrimGrip />
              <TrimIcon $h={13}>
                <RestoreIcon />
              </TrimIcon>
              {trimIcons.map((icon) => (
                <TrimIcon key={icon.key}>{icon}</TrimIcon>
              ))}
            </TrimStack>
          </Trim>
        </Workbench>
      </Eclipse>
      <PlasmWindow>
        <PlasmTitle>
          <PlasmIcon>
            <PythonLogo size={15} />
          </PlasmIcon>
          <PlasmName>PyPlasm</PlasmName>
          <PlasmControls>
            <PlasmButton $w={27}>
              <svg width="10" height="10" viewBox="0 0 10 10">
                <rect y="7" width="10" height="2" fill="#2a2a2a" />
              </svg>
            </PlasmButton>
            <PlasmButton $w={27}>
              <svg width="12" height="10" viewBox="0 0 12 10">
                <rect x="0.700" y="0.700" width="10.600" height="8.600" fill="none" stroke="#2a2a2a" />
                <rect x="0.700" y="0.700" width="10.600" height="1.500" fill="#2a2a2a" />
              </svg>
            </PlasmButton>
            <PlasmButton $w={45} $bg="#c75050">
              <svg width="11" height="11" viewBox="0 0 11 11">
                <path d="M1.500 1.500l8 8M9.500 1.500l-8 8" stroke="#ffffff" strokeWidth="1.800" />
              </svg>
            </PlasmButton>
          </PlasmControls>
        </PlasmTitle>
        <FloorPlanModel />
      </PlasmWindow>
    </Screen>
  );
}
